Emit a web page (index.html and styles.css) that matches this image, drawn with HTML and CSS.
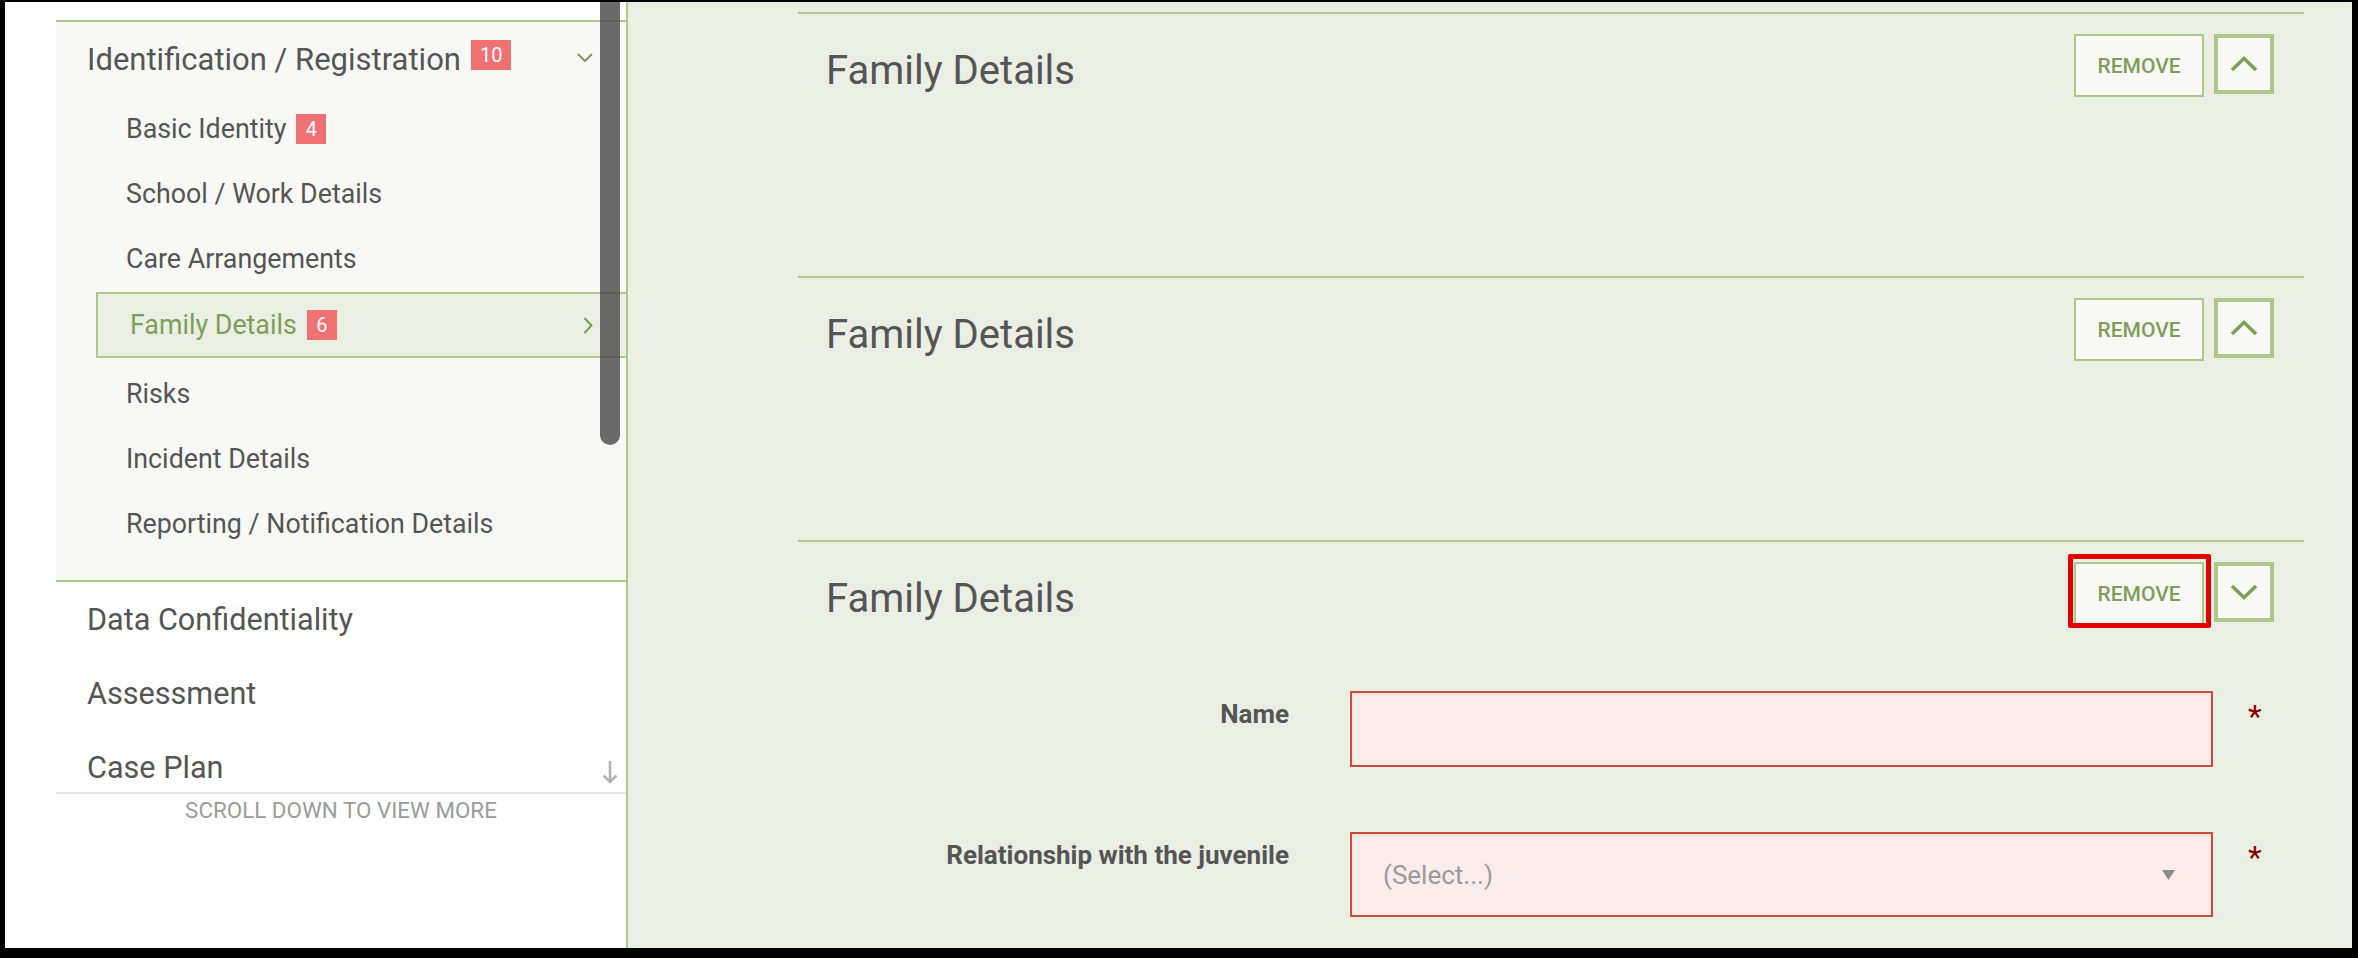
FILE: index.html
```html
<!DOCTYPE html>
<html lang="en">
<head>
<meta charset="utf-8">
<title>Family Details</title>
<link rel="stylesheet" href="styles.css">
</head>
<body>
<div class="frame">
  <aside class="sidebar">
    <nav class="nav-scroll">
      <div class="nav-group">
        <div class="group-head">
          <span class="group-title">Identification / Registration</span>
          <span class="badge">10</span>
          <svg class="chev-down-sm" width="16" height="9" viewBox="0 0 16 9"><path d="M1 1 L8 8 L15 1" fill="none" stroke="#7a9a57" stroke-width="2"/></svg>
        </div>
        <ul class="sub-list">
          <li class="sub-item"><span>Basic Identity</span><span class="badge">4</span></li>
          <li class="sub-item"><span>School / Work Details</span></li>
          <li class="sub-item"><span>Care Arrangements</span></li>
          <li class="sub-item active"><span>Family Details</span><span class="badge">6</span>
            <svg class="chev-right-sm" width="10" height="17" viewBox="0 0 10 17"><path d="M1.5 1 L8.5 8.5 L1.5 16" fill="none" stroke="#7a9a57" stroke-width="2"/></svg>
          </li>
          <li class="sub-item"><span>Risks</span></li>
          <li class="sub-item"><span>Incident Details</span></li>
          <li class="sub-item"><span>Reporting / Notification Details</span></li>
        </ul>
      </div>
      <div class="nav-item">Data Confidentiality</div>
      <div class="nav-item">Assessment</div>
      <div class="nav-item">Case Plan</div>
    </nav>
    <div class="scroll-hint">SCROLL DOWN TO VIEW MORE</div>
    <div class="scrollbar"></div>
    <svg class="more-arrow" width="18" height="25" viewBox="0 0 18 25"><path d="M9 1 V22 M2.5 15.5 L9 22 L15.5 15.5" fill="none" stroke="#b3b3b3" stroke-width="2.5"/></svg>
  </aside>

  <main class="main">
    <section class="fd-section fd-empty">
      <header class="fd-head">
        <h2 class="fd-title">Family Details</h2>
        <div class="fd-actions">
          <button class="btn-remove">REMOVE</button>
          <button class="btn-toggle"><svg width="28" height="16" viewBox="0 0 28 16"><path d="M2 14 L14 2.5 L26 14" fill="none" stroke="#7f9e5c" stroke-width="3.5"/></svg></button>
        </div>
      </header>
    </section>

    <section class="fd-section fd-empty">
      <header class="fd-head">
        <h2 class="fd-title">Family Details</h2>
        <div class="fd-actions">
          <button class="btn-remove">REMOVE</button>
          <button class="btn-toggle"><svg width="28" height="16" viewBox="0 0 28 16"><path d="M2 14 L14 2.5 L26 14" fill="none" stroke="#7f9e5c" stroke-width="3.5"/></svg></button>
        </div>
      </header>
    </section>

    <section class="fd-section">
      <header class="fd-head">
        <h2 class="fd-title">Family Details</h2>
        <div class="fd-actions">
          <button class="btn-remove highlighted">REMOVE<span class="highlight-box"></span></button>
          <button class="btn-toggle"><svg width="28" height="16" viewBox="0 0 28 16"><path d="M2 2 L14 13.5 L26 2" fill="none" stroke="#7f9e5c" stroke-width="3.5"/></svg></button>
        </div>
      </header>
      <div class="fd-form">
        <div class="form-row">
          <label class="form-label">Name</label>
          <div class="input-box name-input"></div>
          <span class="req">*</span>
        </div>
        <div class="form-row">
          <label class="form-label">Relationship with the juvenile</label>
          <div class="input-box select-input">
            <span class="placeholder">(Select...)</span>
            <svg class="select-caret" width="13" height="10" viewBox="0 0 13 10"><path d="M0 0 H13 L6.5 10 Z" fill="#8a8a8a"/></svg>
          </div>
          <span class="req">*</span>
        </div>
      </div>
    </section>
  </main>
</div>
</body>
</html>
```

FILE: styles.css
```css
* { box-sizing: border-box; }

html, body {
  margin: 0;
  padding: 0;
  background: #000;
  font-family: Roboto, "Liberation Sans", Arial, sans-serif;
  color: #555;
}

.frame {
  margin: 2px 6px 0 5px;
  width: 2347px;
  height: 946px;
  display: flex;
  overflow: hidden;
  background: #e9efe3;
}

/* ---------- Sidebar ---------- */
.sidebar {
  position: relative;
  width: 623px;
  flex: 0 0 623px;
  background: #fff;
  border-right: 2px solid #aec78a;
}

.nav-scroll {
  height: 790px;
  overflow: hidden;
  padding-left: 51px;
}

.nav-group {
  margin-top: 18px;
  background: #f8f9f5;
  border-top: 2px solid #aec78a;
  border-bottom: 2px solid #aec78a;
  padding-bottom: 24px;
}

.group-head {
  height: 74px;
  display: flex;
  align-items: center;
  padding: 0 33px 0 31px;
}

.group-title {
  font-size: 31px;
  color: #555;
}

.badge {
  display: inline-block;
  height: 30px;
  line-height: 30px;
  min-width: 30px;
  padding: 0 9px;
  margin-left: 10px;
  background: #f07171;
  color: #fff;
  font-size: 20px;
  text-align: center;
}

.group-head .badge { margin-top: -8px; }

.chev-down-sm { margin-left: auto; margin-top: -4px; }

.sub-list {
  list-style: none;
  margin: 0;
  padding: 0;
}

.sub-item {
  height: 65px;
  display: flex;
  align-items: center;
  padding-left: 70px;
  font-size: 26.8px;
  color: #555;
}

.sub-item.active {
  height: 66px;
  margin: 1px 0 3px 40px;
  padding: 0 33px 0 32px;
  background: #e9efe3;
  border: 2px solid #aec78a;
  border-right: none;
  color: #7f9e5c;
}

.chev-right-sm { margin-left: auto; }

.nav-item {
  height: 74px;
  display: flex;
  align-items: center;
  padding-left: 31px;
  font-size: 30.6px;
  color: #555;
}

.scroll-hint {
  margin-left: 51px;
  border-top: 2px solid #e6e6e6;
  line-height: 32px;
  text-align: center;
  font-size: 22.4px;
  color: #9b9b9b;
}

.scrollbar {
  position: absolute;
  top: -2px;
  left: 595px;
  width: 20px;
  height: 445px;
  border-radius: 0 0 10px 10px;
  background: rgba(70, 70, 70, 0.8);
}

.more-arrow {
  position: absolute;
  left: 596px;
  top: 758px;
}

/* ---------- Main ---------- */
.main {
  flex: 1;
  background: #e9efe3;
  padding: 10px 48px 0 170px;
  overflow: hidden;
}

.fd-section {
  border-top: 2px solid #afc78b;
}

.fd-empty { height: 264px; }

.fd-head {
  display: flex;
  justify-content: space-between;
  align-items: flex-start;
  padding: 0 30px 0 28px;
}

.fd-title {
  margin: 33px 0 0;
  font-size: 40px;
  line-height: 48px;
  font-weight: 400;
  color: #555;
}

.fd-actions {
  margin-top: 20px;
  display: flex;
  gap: 10px;
  align-items: flex-start;
}

.btn-remove {
  position: relative;
  width: 130px;
  height: 63px;
  padding: 0;
  background: #f8f9f4;
  border: 2px solid #aec78a;
  color: #7f9e5c;
  font-family: Roboto, "Liberation Sans", Arial, sans-serif;
  font-size: 21px;
  font-weight: 500;
}

.btn-toggle {
  width: 60px;
  height: 60px;
  padding: 0;
  background: #f8f9f4;
  border: 4px solid #aec78a;
  display: flex;
  align-items: center;
  justify-content: center;
}

.highlight-box {
  position: absolute;
  top: -10px;
  left: -8px;
  right: -9px;
  bottom: -5px;
  border: 5px solid #e30000;
  border-radius: 2px;
}

.fd-form {
  margin-top: 66px;
}

.form-row {
  display: grid;
  grid-template-columns: 552px 863px auto;
  align-items: start;
  margin-bottom: 65px;
}

.form-label {
  padding-right: 61px;
  margin-top: 7px;
  text-align: right;
  font-size: 26px;
  line-height: 32px;
  font-weight: 700;
  color: #555;
}

.input-box {
  background: #faecea;
  border: 2px solid #cc4b3c;
  box-shadow: inset 0 2px 3px rgba(0, 0, 0, 0.05);
}

.name-input { height: 76px; }

.select-input {
  height: 85px;
  display: flex;
  align-items: center;
  padding: 0 36px 0 31px;
}

.placeholder {
  font-size: 26px;
  color: #9a9a9a;
}

.select-caret { margin-left: auto; }

.req {
  padding-left: 35px;
  margin-top: 5px;
  font-size: 32px;
  line-height: 40px;
  color: #8b0000;
}
```
